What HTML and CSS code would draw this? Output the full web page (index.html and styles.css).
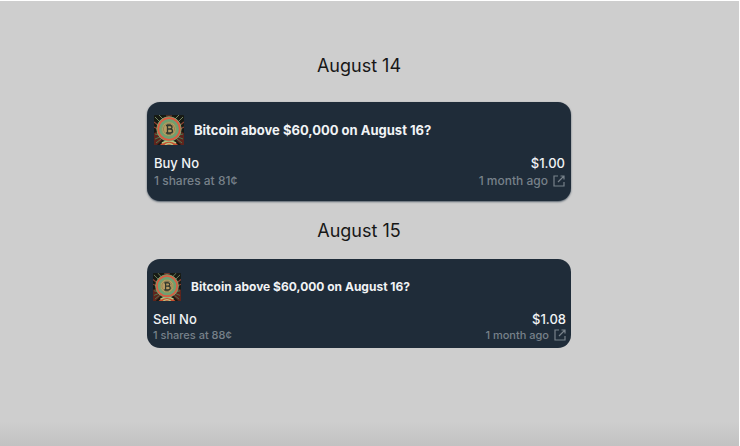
FILE: index.html
```html
<!DOCTYPE html>
<html lang="en">
<head>
<meta charset="utf-8">
<title>Activity</title>
<link rel="stylesheet" href="styles.css">
</head>
<body>
<svg class="defs" aria-hidden="true">
  <symbol id="coin" viewBox="0 0 30 30">
    <rect width="30" height="30" rx="1" fill="#171a14"/>
    <path d="M0 18L5 16L8 25L3 30H0ZM30 18L25 16L22 25L27 30H30Z" fill="#5e241c"/>
    <path d="M1 2L7 8M5 0L10 5M29 2L23 8M25 0L20 5" stroke="#71855f" stroke-width="1"/>
    <path d="M0 7L5 11M0 12L4 14M30 7L25 11M30 12L26 14M12 1H18" stroke="#8e4335" stroke-width="1.2"/>
    <path d="M1 19L5 20M1 24L6 22M29 19L25 20M29 24L24 22M2 28L7 24M28 28L23 24" stroke="#4f7952" stroke-width="1"/>
    <path d="M6 30Q15 20 24 30Z" fill="#c94d2e"/>
    <path d="M8 28Q15 24 22 28M11 30Q15 27 19 30" fill="none" stroke="#b3c482" stroke-width="1.5"/>
    <circle cx="15" cy="14" r="12.2" fill="#629566" stroke="#8eae78" stroke-width=".8"/>
    <circle cx="15" cy="14" r="10.8" fill="#6ea072" stroke="#df5940" stroke-width="1.7"/>
    <circle cx="15" cy="14" r="7.1" fill="#c3a365" stroke="#8d9b5e" stroke-width="1"/>
    <circle cx="15" cy="14" r="5.6" fill="#b79b62" stroke="#78714b" stroke-width=".6"/>
    <path d="M12 10.5H16Q18 10.5 18 12.2Q18 14 16 14Q18.5 14 18.5 16Q18.5 18 16 18H12M13.5 10.5V18M13.5 14H16M14 9V10.5M16 9V10.5M14 18V19.5M16 18V19.5" fill="none" stroke="#30382c" stroke-width="1.3"/>
  </symbol>
  <symbol id="external" viewBox="0 0 12 12">
    <path d="M5 1H1V11H11V7M7.5 1H11V4.5M11 1L5 7" fill="none" stroke="currentColor" stroke-width="1.2"/>
  </symbol>
</svg>
<main class="activity">
  <section class="day">
    <h2 class="date">August 14</h2>
    <article class="card card-raised">
      <header class="market">
        <svg class="coin" viewBox="0 0 30 30" role="img" aria-label="Bitcoin"><use href="#coin"/></svg>
        <h3 class="title">Bitcoin above $60,000 on August 16?</h3>
      </header>
      <div class="row trade"><span>Buy No</span><span>$1.00</span></div>
      <div class="row detail"><span>1 shares at 81¢</span><a class="when" href="#">1 month ago <svg class="external" aria-hidden="true"><use href="#external"/></svg></a></div>
    </article>
  </section>
  <section class="day">
    <h2 class="date">August 15</h2>
    <article class="card card-compact">
      <header class="market">
        <svg class="coin" viewBox="0 0 30 30" role="img" aria-label="Bitcoin"><use href="#coin"/></svg>
        <h3 class="title">Bitcoin above $60,000 on August 16?</h3>
      </header>
      <div class="row trade"><span>Sell No</span><span>$1.08</span></div>
      <div class="row detail"><span>1 shares at 88¢</span><a class="when" href="#">1 month ago <svg class="external" aria-hidden="true"><use href="#external"/></svg></a></div>
    </article>
  </section>
</main>
</body>
</html>
```
FILE: styles.css
```css
* { box-sizing: border-box; }
body {
  margin: 0;
  min-height: 100vh;
  border-top: 1px solid #fff;
  border-right: 1px solid #fff;
  background: linear-gradient(to top, #c2c2c2, #cecece 24px);
  font-family: Inter, "Liberation Sans", sans-serif;
}
.defs { position: absolute; width: 0; height: 0; }
.activity {
  display: flex;
  flex-direction: column;
  gap: 18px;
  padding: 53px 168px 40px 147px;
}
.day { display: flex; flex-direction: column; gap: 24px; }
.day + .day { gap: 16px; }
.date {
  margin: 0;
  color: #171717;
  font-size: 18px;
  font-weight: 400;
  line-height: 24px;
  text-align: center;
}
.card {
  padding: 13px 6px 11px 7px;
  border-radius: 13px;
  background: #1f2c39;
  color: #f1f3f5;
}
.card-raised { box-shadow: 0 1px 2px #56616c; }
.card-compact { padding: 14px 5px 5px 6px; }
.market { display: flex; align-items: center; gap: 10px; margin-bottom: 9px; }
.card-compact .market { margin-bottom: 10px; }
.coin { display: block; width: 30px; height: 30px; }
.card-compact .coin { width: 28px; height: 28px; }
.title { margin: 0; font-size: 13px; font-weight: 700; line-height: 18px; }
.card-compact .title { font-size: 12px; }
.row { display: flex; justify-content: space-between; align-items: center; }
.trade { font-size: 13px; font-weight: 500; line-height: 18px; }
.card-compact .trade { font-size: 13px; line-height: 16px; }
.detail { color: #77818a; font-size: 12px; font-weight: 500; line-height: 18px; }
.card-compact .detail { font-size: 11px; line-height: 16px; }
.when { display: flex; align-items: center; gap: 5px; color: inherit; text-decoration: none; }
.external { display: block; width: 12px; height: 12px; }
```
